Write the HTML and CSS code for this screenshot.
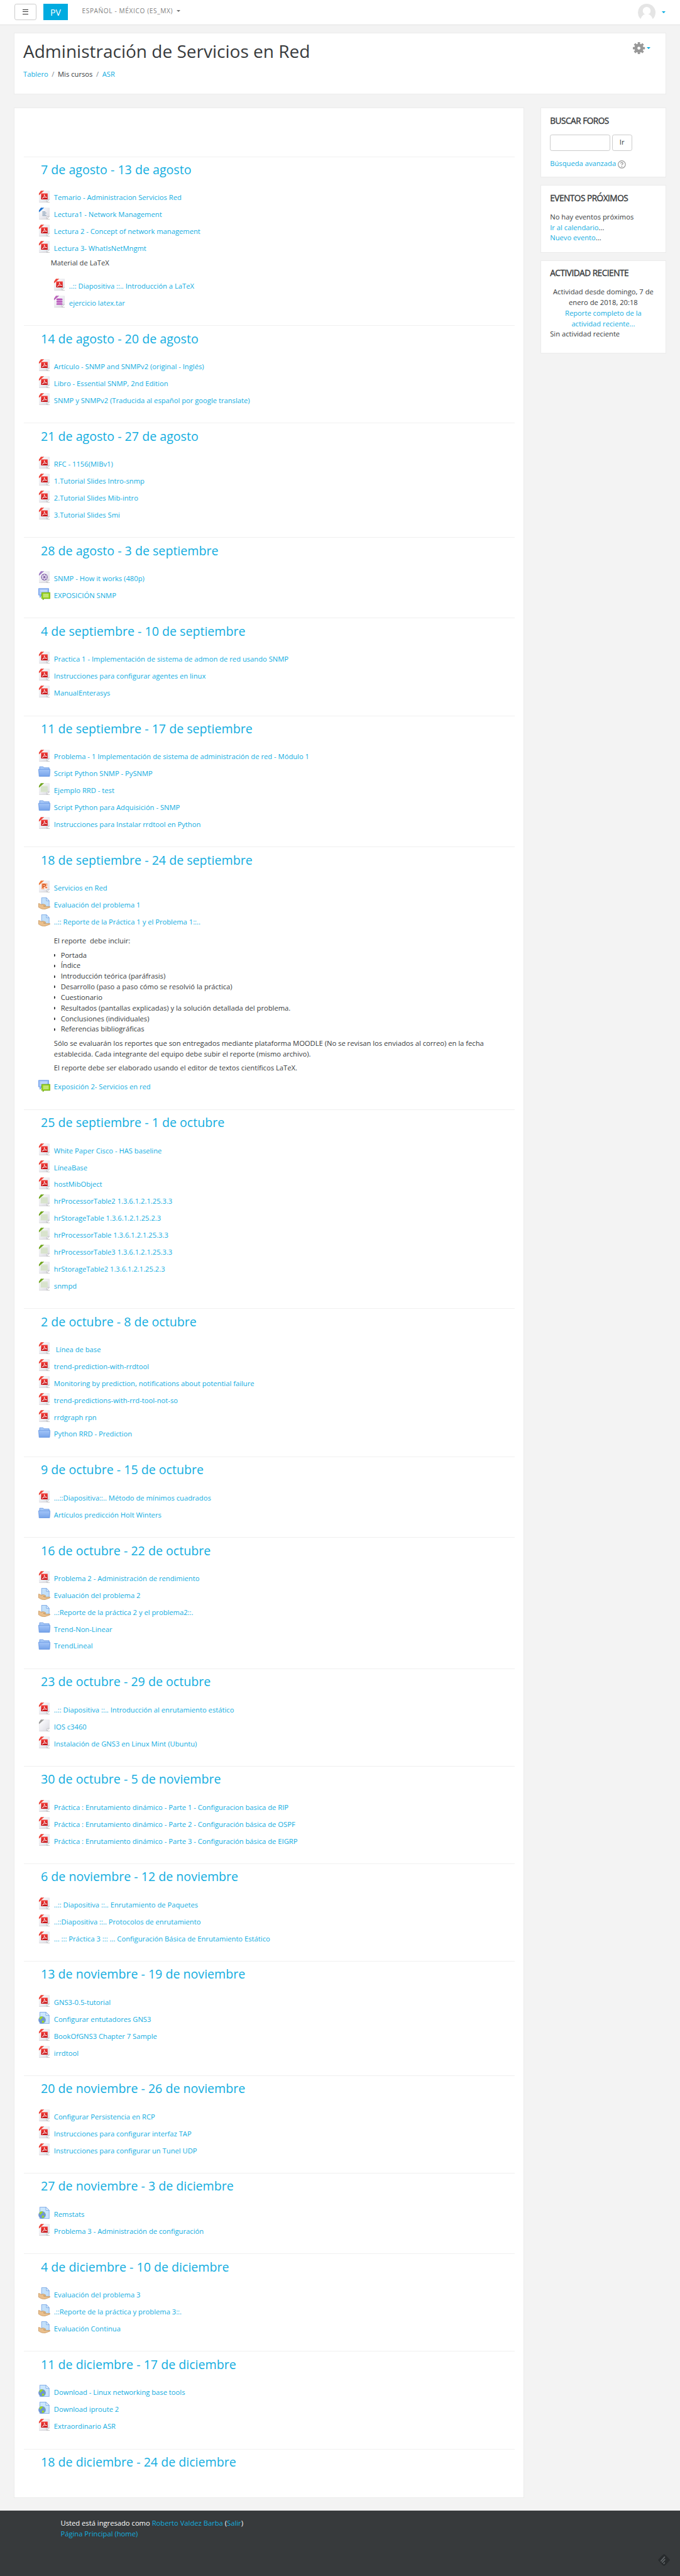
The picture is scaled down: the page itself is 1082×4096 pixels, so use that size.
FILE: index.html
```html
<!DOCTYPE html>
<html lang="es-MX">
<head>
<meta charset="utf-8">
<title>Administración de Servicios en Red</title>
<link rel="stylesheet" href="styles.css">
</head>
<body>
<svg class="sprite" aria-hidden="true">
  <defs>
    <linearGradient id="paper" x1="0" y1="0" x2="1" y2="1"><stop offset="0" stop-color="#fff"/><stop offset=".5" stop-color="#ededf2"/><stop offset="1" stop-color="#d9d9df"/></linearGradient>
    <linearGradient id="blue" x1="0" y1="0" x2="0" y2="1"><stop offset="0" stop-color="#a3c5f8"/><stop offset="1" stop-color="#77a4ea"/></linearGradient>
    <linearGradient id="red" x1="0" y1="0" x2="0" y2="1"><stop offset="0" stop-color="#f43f3a"/><stop offset="1" stop-color="#c20d12"/></linearGradient>
    <symbol id="sheet" viewBox="0 0 24 24">
      <path d="M2 22.6h20.5v1.2H2z" fill="#c9c9c9"/>
      <path d="M9.500 1H22v16.500l-5 5.500H2V8.500z" fill="url(#paper)" stroke="#dcdce1" stroke-width=".6"/>
      <path d="M22 17.500l-5 5.500 .3-4.600z" fill="#fff" stroke="#a9a9b0" stroke-width=".7"/>
    </symbol>
    <symbol id="pdf" viewBox="0 0 24 24">
      <use href="#sheet"/><path d="M5 .3h6.500L1.200 9.500V5.800z" fill="#ee4238"/>
      <path d="M5.500 5.500H18.500V17.500H5.500z" fill="url(#red)"/>
      <path d="M7.500 15.500c3-1 4.600-4 4.400-7.500.5 3 2 5.300 5 5.600-3.600-.6-6.500.2-9.400 1.900z" fill="none" stroke="#fff" stroke-width="1"/>
    </symbol>
    <symbol id="doc" viewBox="0 0 24 24">
      <use href="#sheet"/><path d="M5 .3h6.500L1.200 9.500V5.800z" fill="#1a72d2"/>
      <path d="M8 8.500h6M8 11h8M8 13.500h6M8 16h8" stroke="#7d96b0" stroke-width="1.300"/>
    </symbol>
    <symbol id="tar" viewBox="0 0 24 24">
      <use href="#sheet"/><path d="M5 .3h6.500L1.200 9.500V5.800z" fill="#b964b9"/>
      <path d="M7 5h10v13H7z" fill="#dba4dc"/><path d="M6 6.500h12v2.500H6zM6 11h12v2.500H6zM6 15.500h12V18H6z" fill="#b34fb6"/>
    </symbol>
    <symbol id="video" viewBox="0 0 24 24">
      <use href="#sheet"/><path d="M5 .3h6.500L1.200 9.500V5.800z" fill="#a07bc6"/>
      <circle cx="12" cy="12" r="6.600" fill="#8364a8"/>
      <g fill="#efeaf5"><circle cx="12" cy="8.300" r="1.700"/><circle cx="12" cy="15.700" r="1.700"/><circle cx="8.700" cy="10.200" r="1.700"/><circle cx="15.300" cy="10.200" r="1.700"/><circle cx="8.700" cy="13.900" r="1.700"/><circle cx="15.300" cy="13.900" r="1.700"/></g>
    </symbol>
    <symbol id="ppt" viewBox="0 0 24 24">
      <use href="#sheet"/><path d="M5 .3h6.500L1.200 9.500V5.800z" fill="#ef7838"/>
      <path d="M6 5.500H18V17.500H6z" fill="#f9b48d"/><path d="M12 11h6v6.500h-6z" fill="#fff"/>
      <path d="M9 15V7.500h3q2.300 0 2.300 2.200T12 12H9" fill="none" stroke="#d4501b" stroke-width="1.800"/><circle cx="15.500" cy="14" r="2" fill="#ee7c48"/>
    </symbol>
    <symbol id="sheetgreen" viewBox="0 0 24 24">
      <use href="#sheet"/><path d="M6 5.500h12.500V18H4.500V9z" fill="#dbe5d0"/><path d="M5 9.500h13.500M5 12.500h13.500M5 15.500h13.500" stroke="#cfdcc2" stroke-width=".8"/>
      <path d="M5 .3h6.500L1.200 9.500V5.800z" fill="#6fa51c"/>
    </symbol>
    <symbol id="blank" viewBox="0 0 24 24">
      <use href="#sheet"/><path d="M5 .3h6.500L1.200 9.500V5.800z" fill="#9b9b9b"/>
    </symbol>
    <symbol id="folder" viewBox="0 0 24 24">
      <path d="M2.500 9V1.500h7L11 3.500h10.500V10z" fill="#a9caf9" stroke="#5c8fdf"/>
      <path d="M.6 6.500h22.800L22.400 20.500H1.600z" fill="url(#blue)" stroke="#5c8fdf"/>
    </symbol>
    <symbol id="forum" viewBox="0 0 24 24">
      <path d="M.6 1h20v13H6L3.500 19 3 14H.6z" fill="#9bbff8" stroke="#5d90e3"/>
      <path d="M3.500 4.500h14M3.500 7.500h14M3.500 10.500h8" stroke="#fff"/>
      <path d="M6.600 9H23.400v12H12l-3 2.600.5-2.600H6.600z" fill="#98d316" stroke="#62a005"/>
      <path d="M9.500 12.500h11M9.500 15h11M9.500 17.500h11" stroke="#fff"/>
    </symbol>
    <symbol id="assign" viewBox="0 0 24 24">
      <path d="M6.500 .6h9.500l5.500 6V19.500h-15z" fill="#c3e0fa" stroke="#6d9fe3"/>
      <path d="M16 .6v6h5.500z" fill="#e9f5ff" stroke="#6d9fe3"/>
      <path d="M.6 12c2 .2 3.600 1.200 5 2.300 3-1.600 6-.6 8.400.7 1.500.8.8 2.200-1 2l-3-.2 3.500 1.200L22.500 18c1.500.3.800 1.700-.5 2.200l-9.500 3.200C8 23.800 4 21.500.6 19.500z" fill="#eabf8c" stroke="#b98244" stroke-width=".8"/>
    </symbol>
    <symbol id="url" viewBox="0 0 24 24">
      <path d="M3 .6h12l6.500 6.500V23.400H3z" fill="#cbe6fd" stroke="#6d9fe3"/>
      <path d="M15 .6v6.500h6.500z" fill="#eef7ff" stroke="#6d9fe3"/>
      <circle cx="7.500" cy="16" r="7.300" fill="#6e94d6"/>
      <path d="M2 12c2-3 5-3.500 6-2.500l1 2-3 1.500-1 3-2-1zM8 17l4 1-1 3-3 1.500-1-3zM11 11l2.500 2-1 2z" fill="#9fd926"/>
    </symbol>
  </defs>
</svg>

<header class="topbar">
  <button class="menu-button" type="button" aria-label="Menú"><span></span><span></span><span></span></button>
  <a class="brand">PV</a>
  <a class="language">Español - México (es_mx) <i class="caret"></i></a>
  <div class="user">
    <svg class="avatar" viewBox="0 0 35 35"><clipPath id="round"><circle cx="17.500" cy="17.500" r="17.500"/></clipPath><g clip-path="url(#round)"><path d="M0 0h35v30H0z" fill="#e5e5e5"/><circle cx="17.500" cy="14" r="7.800" fill="#fff"/><path d="M5 31.500C7 25 11 21.500 13.500 21h8C25 22 28 26 30 31.500L28 36H7z" fill="#fff"/></g></svg>
    <i class="caret caret-blue"></i>
  </div>
</header>

<section class="page-header">
  <div>
    <h1>Administración de Servicios en Red</h1>
    <nav class="breadcrumb"><a>Tablero</a><i>/</i><span>Mis cursos</span><i>/</i><a>ASR</a></nav>
  </div>
  <div class="settings">
    <svg class="gear" viewBox="0 0 24 24"><g fill="#999"><circle cx="12" cy="12" r="9"/><path id="tooth" d="M9.700 0h4.600v24H9.700z"/><use href="#tooth" transform="rotate(45 12 12)"/><use href="#tooth" transform="rotate(90 12 12)"/><use href="#tooth" transform="rotate(135 12 12)"/></g><circle cx="12" cy="12" r="3" fill="#fff"/></svg>
    <i class="caret caret-blue"></i>
  </div>
</section>

<div class="columns">
<main class="course">
  <section class="week"><h3>7 de agosto - 13 de agosto</h3><ul>
    <li><svg><use href="#pdf"/></svg><a>Temario - Administracion Servicios Red</a></li>
    <li><svg><use href="#doc"/></svg><a>Lectura1 - Network Management</a></li>
    <li><svg><use href="#pdf"/></svg><a>Lectura 2 - Concept of network management</a></li>
    <li><svg><use href="#pdf"/></svg><a>Lectura 3- WhatIsNetMngmt</a></li>
    <li class="label">Material de LaTeX</li>
    <li class="indent"><svg><use href="#pdf"/></svg><a>..:: Diapositiva ::.. Introducción a LaTeX</a></li>
    <li class="indent"><svg><use href="#tar"/></svg><a>ejercicio latex.tar</a></li>
  </ul></section>
  <section class="week"><h3>14 de agosto - 20 de agosto</h3><ul>
    <li><svg><use href="#pdf"/></svg><a>Artículo - SNMP and SNMPv2 (original - Inglés)</a></li>
    <li><svg><use href="#pdf"/></svg><a>Libro - Essential SNMP, 2nd Edition</a></li>
    <li><svg><use href="#pdf"/></svg><a>SNMP y SNMPv2 (Traducida al español por google translate)</a></li>
  </ul></section>
  <section class="week"><h3>21 de agosto - 27 de agosto</h3><ul>
    <li><svg><use href="#pdf"/></svg><a>RFC - 1156(MIBv1)</a></li>
    <li><svg><use href="#pdf"/></svg><a>1.Tutorial Slides Intro-snmp</a></li>
    <li><svg><use href="#pdf"/></svg><a>2.Tutorial Slides Mib-intro</a></li>
    <li><svg><use href="#pdf"/></svg><a>3.Tutorial Slides Smi</a></li>
  </ul></section>
  <section class="week"><h3>28 de agosto - 3 de septiembre</h3><ul>
    <li><svg><use href="#video"/></svg><a>SNMP - How it works (480p)</a></li>
    <li><svg><use href="#forum"/></svg><a>EXPOSICIÓN SNMP</a></li>
  </ul></section>
  <section class="week"><h3>4 de septiembre - 10 de septiembre</h3><ul>
    <li><svg><use href="#pdf"/></svg><a>Practica 1 - Implementación de sistema de admon de red usando SNMP</a></li>
    <li><svg><use href="#pdf"/></svg><a>Instrucciones para configurar agentes en linux</a></li>
    <li><svg><use href="#pdf"/></svg><a>ManualEnterasys</a></li>
  </ul></section>
  <section class="week"><h3>11 de septiembre - 17 de septiembre</h3><ul>
    <li><svg><use href="#pdf"/></svg><a>Problema - 1 Implementación de sistema de administración de red - Módulo 1</a></li>
    <li><svg><use href="#folder"/></svg><a>Script Python SNMP - PySNMP</a></li>
    <li><svg><use href="#sheetgreen"/></svg><a>Ejemplo RRD - test</a></li>
    <li><svg><use href="#folder"/></svg><a>Script Python para Adquisición - SNMP</a></li>
    <li><svg><use href="#pdf"/></svg><a>Instrucciones para Instalar rrdtool en Python</a></li>
  </ul></section>
  <section class="week"><h3>18 de septiembre - 24 de septiembre</h3><ul>
    <li><svg><use href="#ppt"/></svg><a>Servicios en Red</a></li>
    <li><svg><use href="#assign"/></svg><a>Evaluación del problema 1</a></li>
    <li><svg><use href="#assign"/></svg><a>..:: Reporte de la Práctica 1 y el Problema 1::..</a></li>
    <li class="details">
      <p>El reporte&nbsp; debe incluir:</p>
      <ul class="bullets">
        <li>Portada</li><li>Índice</li><li>Introducción teórica (paráfrasis)</li><li>Desarrollo (paso a paso cómo se resolvió la práctica)</li><li>Cuestionario</li><li>Resultados (pantallas explicadas) y la solución detallada del problema.</li><li>Conclusiones (individuales)</li><li>Referencias bibliográficas</li>
      </ul>
      <p>Sólo se evaluarán los reportes que son entregados mediante plataforma MOODLE (No se revisan los enviados al correo) en la fecha<br>establecida. Cada integrante del equipo debe subir el reporte (mismo archivo).</p>
      <p>El reporte debe ser elaborado usando el editor de textos científicos LaTeX.</p>
    </li>
    <li><svg><use href="#forum"/></svg><a>Exposición 2- Servicios en red</a></li>
  </ul></section>
  <section class="week"><h3>25 de septiembre - 1 de octubre</h3><ul>
    <li><svg><use href="#pdf"/></svg><a>White Paper Cisco - HAS baseline</a></li>
    <li><svg><use href="#pdf"/></svg><a>LíneaBase</a></li>
    <li><svg><use href="#pdf"/></svg><a>hostMibObject</a></li>
    <li><svg><use href="#sheetgreen"/></svg><a>hrProcessorTable2 1.3.6.1.2.1.25.3.3</a></li>
    <li><svg><use href="#sheetgreen"/></svg><a>hrStorageTable 1.3.6.1.2.1.25.2.3</a></li>
    <li><svg><use href="#sheetgreen"/></svg><a>hrProcessorTable 1.3.6.1.2.1.25.3.3</a></li>
    <li><svg><use href="#sheetgreen"/></svg><a>hrProcessorTable3 1.3.6.1.2.1.25.3.3</a></li>
    <li><svg><use href="#sheetgreen"/></svg><a>hrStorageTable2 1.3.6.1.2.1.25.2.3</a></li>
    <li><svg><use href="#sheetgreen"/></svg><a>snmpd</a></li>
  </ul></section>
  <section class="week"><h3>2 de octubre - 8 de octubre</h3><ul>
    <li><svg><use href="#pdf"/></svg><a>&nbsp;Línea de base</a></li>
    <li><svg><use href="#pdf"/></svg><a>trend-prediction-with-rrdtool</a></li>
    <li><svg><use href="#pdf"/></svg><a>Monitoring by prediction, notifications about potential failure</a></li>
    <li><svg><use href="#pdf"/></svg><a>trend-predictions-with-rrd-tool-not-so</a></li>
    <li><svg><use href="#pdf"/></svg><a>rrdgraph rpn</a></li>
    <li><svg><use href="#folder"/></svg><a>Python RRD - Prediction</a></li>
  </ul></section>
  <section class="week"><h3>9 de octubre - 15 de octubre</h3><ul>
    <li><svg><use href="#pdf"/></svg><a>...::Diapositiva::.. Método de mínimos cuadrados</a></li>
    <li><svg><use href="#folder"/></svg><a>Artículos predicción Holt Winters</a></li>
  </ul></section>
  <section class="week"><h3>16 de octubre - 22 de octubre</h3><ul>
    <li><svg><use href="#pdf"/></svg><a>Problema 2 - Administración de rendimiento</a></li>
    <li><svg><use href="#assign"/></svg><a>Evaluación del problema 2</a></li>
    <li><svg><use href="#assign"/></svg><a>..:Reporte de la práctica 2 y el problema2::.</a></li>
    <li><svg><use href="#folder"/></svg><a>Trend-Non-Linear</a></li>
    <li><svg><use href="#folder"/></svg><a>TrendLineal</a></li>
  </ul></section>
  <section class="week"><h3>23 de octubre - 29 de octubre</h3><ul>
    <li><svg><use href="#pdf"/></svg><a>..:: Diapositiva ::.. Introducción al enrutamiento estático</a></li>
    <li><svg><use href="#blank"/></svg><a>IOS c3460</a></li>
    <li><svg><use href="#pdf"/></svg><a>Instalación de GNS3 en Linux Mint (Ubuntu)</a></li>
  </ul></section>
  <section class="week"><h3>30 de octubre - 5 de noviembre</h3><ul>
    <li><svg><use href="#pdf"/></svg><a>Práctica : Enrutamiento dinámico - Parte 1 - Configuracion basica de RIP</a></li>
    <li><svg><use href="#pdf"/></svg><a>Práctica : Enrutamiento dinámico - Parte 2 - Configuración básica de OSPF</a></li>
    <li><svg><use href="#pdf"/></svg><a>Práctica : Enrutamiento dinámico - Parte 3 - Configuración básica de EIGRP</a></li>
  </ul></section>
  <section class="week"><h3>6 de noviembre - 12 de noviembre</h3><ul>
    <li><svg><use href="#pdf"/></svg><a>..:: Diapositiva ::.. Enrutamiento de Paquetes</a></li>
    <li><svg><use href="#pdf"/></svg><a>..::Diapositiva ::.. Protocolos de enrutamiento</a></li>
    <li><svg><use href="#pdf"/></svg><a>... ::: Práctica 3 ::: ... Configuración Básica de Enrutamiento Estático</a></li>
  </ul></section>
  <section class="week"><h3>13 de noviembre - 19 de noviembre</h3><ul>
    <li><svg><use href="#pdf"/></svg><a>GNS3-0.5-tutorial</a></li>
    <li><svg><use href="#url"/></svg><a>Configurar entutadores GNS3</a></li>
    <li><svg><use href="#pdf"/></svg><a>BookOfGNS3 Chapter 7 Sample</a></li>
    <li><svg><use href="#pdf"/></svg><a>irrdtool</a></li>
  </ul></section>
  <section class="week"><h3>20 de noviembre - 26 de noviembre</h3><ul>
    <li><svg><use href="#pdf"/></svg><a>Configurar Persistencia en RCP</a></li>
    <li><svg><use href="#pdf"/></svg><a>Instrucciones para configurar interfaz TAP</a></li>
    <li><svg><use href="#pdf"/></svg><a>Instrucciones para configurar un Tunel UDP</a></li>
  </ul></section>
  <section class="week"><h3>27 de noviembre - 3 de diciembre</h3><ul>
    <li><svg><use href="#url"/></svg><a>Remstats</a></li>
    <li><svg><use href="#pdf"/></svg><a>Problema 3 - Administración de configuración</a></li>
  </ul></section>
  <section class="week"><h3>4 de diciembre - 10 de diciembre</h3><ul>
    <li><svg><use href="#assign"/></svg><a>Evaluación del problema 3</a></li>
    <li><svg><use href="#assign"/></svg><a>.::Reporte de la práctica y problema 3::.</a></li>
    <li><svg><use href="#assign"/></svg><a>Evaluación Continua</a></li>
  </ul></section>
  <section class="week"><h3>11 de diciembre - 17 de diciembre</h3><ul>
    <li><svg><use href="#url"/></svg><a>Download - Linux networking base tools</a></li>
    <li><svg><use href="#url"/></svg><a>Download iproute 2</a></li>
    <li><svg><use href="#pdf"/></svg><a>Extraordinario ASR</a></li>
  </ul></section>
  <section class="week"><h3>18 de diciembre - 24 de diciembre</h3></section>
</main>

<aside class="side">
  <section class="block">
    <h4>Buscar foros</h4>
    <form class="search"><input type="text" aria-label="Buscar"><button type="button">Ir</button></form>
    <p class="advanced"><a>Búsqueda avanzada</a>
      <svg viewBox="0 0 16 16"><circle cx="8" cy="8" r="7.200" fill="none" stroke="#999" stroke-width="1.500"/><path d="M5.800 6.300Q5.900 4.200 8 4.200T10.200 6.100Q10.200 7.200 9 7.800T8 9.600" fill="none" stroke="#999" stroke-width="1.700"/><circle cx="8" cy="12" r="1.100" fill="#999"/></svg></p>
  </section>
  <section class="block">
    <h4>Eventos próximos</h4>
    <p>No hay eventos próximos</p>
    <p><a>Ir al calendario</a>...</p>
    <p><a>Nuevo evento</a>...</p>
  </section>
  <section class="block block-recent">
    <h4>Actividad reciente</h4>
    <p class="centered">Actividad desde domingo, 7 de<br>enero de 2018, 20:18</p>
    <p class="centered"><a>Reporte completo de la<br>actividad reciente...</a></p>
    <p>Sin actividad reciente</p>
  </section>
</aside>
</div>

<footer class="footer">
  <div>
    <p>Usted está ingresado como <a>Roberto Valdez Barba</a> (<a>Salir</a>)</p>
    <p><a>Página Principal (home)</a></p>
  </div>
  <svg class="badge" viewBox="0 0 24 24"><path d="M12 0l4 3 8 9-8 9-4 3-4-3-8-9 8-9z" fill="#282b2d"/><path d="M6 14l7-8M8.500 16.500l5-5.500M11.500 19l1.500-1.500" stroke="#62676a" stroke-width="2.200" stroke-linecap="round"/></svg>
</footer>
</body>
</html>
```

FILE: styles.css
```css
/* 1rem is ten layout units */
html { font-size: 8.0075px; }
* { box-sizing: border-box; }
body {
  margin: 0;
  background: #f3f3f3;
  color: #373a3c;
  font: 1.4rem/2.1rem "Open Sans", "Noto Sans", sans-serif;
  height: 4096px;
  display: flex;
  flex-direction: column;
}
h1, h3, h4, p, ul { margin: 0; padding: 0; font-weight: 400; }
ul { list-style: none; }
i { font-style: normal; }
a { color: #12addf; }
.sprite { position: absolute; width: 0; height: 0; }

.caret {
  display: inline-block;
  border: .4rem solid transparent;
  border-top-color: #707070;
  border-bottom: 0;
}
.caret-blue { border-top-color: #00a9df; }

.topbar {
  height: 5rem;
  flex: none;
  background: #fff;
  border-bottom: 1px solid #e1e1e1;
  display: flex;
  align-items: flex-start;
  padding: .7rem 2.9rem 0;
}
.menu-button {
  width: 4.3rem;
  height: 3.3rem;
  padding: 0;
  background: #fff;
  border: 1px solid #ccc;
  border-radius: .4rem;
  display: flex;
  flex-direction: column;
  align-items: center;
  justify-content: center;
  gap: .35rem;
}
.menu-button span { width: 1.1rem; height: 1px; background: #333; }
.brand {
  width: 4.9rem;
  height: 3.3rem;
  margin-left: 1.4rem;
  background: #00abe0;
  color: #fff;
  font-size: 1.75rem;
  line-height: 3.4rem;
  text-align: center;
}
.language {
  margin: .45rem 0 0 2.8rem;
  color: #818181;
  font-size: 1.26rem;
  letter-spacing: .08rem;
  text-transform: uppercase;
}
.language .caret { margin: 0 0 .25rem .3rem; }
.user { margin-left: auto; display: flex; align-items: center; gap: 1.2rem; }
.avatar { width: 3.5rem; height: 3.5rem; }

.page-header {
  flex: none;
  height: 12.3rem;
  margin: 1.45rem 2.75rem 0;
  padding: 1.7rem 3rem 0 1.75rem;
  background: #fff;
  border: 1px solid #ebebeb;
  display: flex;
  justify-content: space-between;
}
.page-header h1 { font-size: 3.5rem; line-height: 3.85rem; }
.breadcrumb { margin-top: 1.6rem; }
.breadcrumb i { color: #818a91; padding: 0 .7rem; }
.settings { display: flex; gap: .3rem; height: 2.4rem; margin-top: .1rem; align-items: center; }
.gear { width: 2.4rem; height: 2.4rem; }

.columns {
  display: flex;
  justify-content: space-between;
  align-items: flex-start;
  margin: 2.6rem 2.8rem 0;
}
.course {
  width: 101.400rem;
  height: 474.700rem;
  padding: 9.6rem 1.8rem 0;
  background: #fff;
  border: 1px solid #ebebeb;
}
.week { border-top: 1px solid #f0f0f0; padding-bottom: 2.545rem; }
.week h3 {
  font-size: 2.45rem;
  line-height: 2.7rem;
  padding: 1.15rem 0 0 3.4rem;
  height: 6.62rem;
  color: #12addf;
}
.week > ul > li {
  height: 3.36rem;
  padding-left: 2.9rem;
  display: flex;
  gap: .7rem;
}
.week > ul > li > svg { width: 2.4rem; height: 2.4rem; flex: none; }
.week > ul > li > a { padding-top: .45rem; white-space: pre; }
.week > ul > li.indent { padding-left: 5.9rem; }
.week > ul > li.label { height: 4.1rem; padding-left: 5.35rem; }
.week > ul > li.details {
  display: flex;
  flex-direction: column;
  height: auto;
  gap: .7rem;
  padding: .9rem 0 1.25rem 6rem;
}
.details p { white-space: nowrap; }
.bullets li { display: flex; align-items: center; }
.bullets li::before {
  content: "";
  width: .3rem;
  height: .5rem;
  margin-right: 1.05rem;
  background: #373a3c;
  border-radius: 0 50% 50% 0;
}

.side { width: 24.9rem; display: flex; flex-direction: column; gap: 1.5rem; }
.block {
  background: #fff;
  border: 1px solid #ebebeb;
  padding: 1.45rem 1.75rem 0;
  height: 13.9rem;
}
.block + .block { height: 13.4rem; }
.block.block-recent { height: 18.5rem; }
.block h4 {
  font-size: 1.7rem;
  line-height: 2.1rem;
  margin-bottom: 1.65rem;
  text-transform: uppercase;
  -webkit-text-stroke: .05rem #373a3c;
  letter-spacing: -.06rem;
}
.block p { white-space: nowrap; }
.centered { text-align: center; }
.search { display: flex; gap: .3rem; }
.search input { width: 12rem; height: 3.3rem; border: 1px solid #ccc; border-radius: .4rem; background: #fff; }
.search button {
  width: 4rem;
  height: 3.3rem;
  padding: 0;
  border: 1px solid #ccc;
  border-radius: .4rem;
  background: #fff;
  color: #373a3c;
  font: inherit;
}
.block .advanced { display: flex; margin-top: 1.5rem; gap: .4rem; }
.advanced svg { width: 1.6rem; height: 1.6rem; margin-top: .35rem; }

.footer {
  flex: 1;
  margin-top: 2.5rem;
  padding: 1.45rem 2rem 0 12.050rem;
  background: #373a3c;
  color: #fff;
  display: flex;
  justify-content: space-between;
}
.badge { width: 2.4rem; height: 2.4rem; margin-top: 7.200rem; }
```
